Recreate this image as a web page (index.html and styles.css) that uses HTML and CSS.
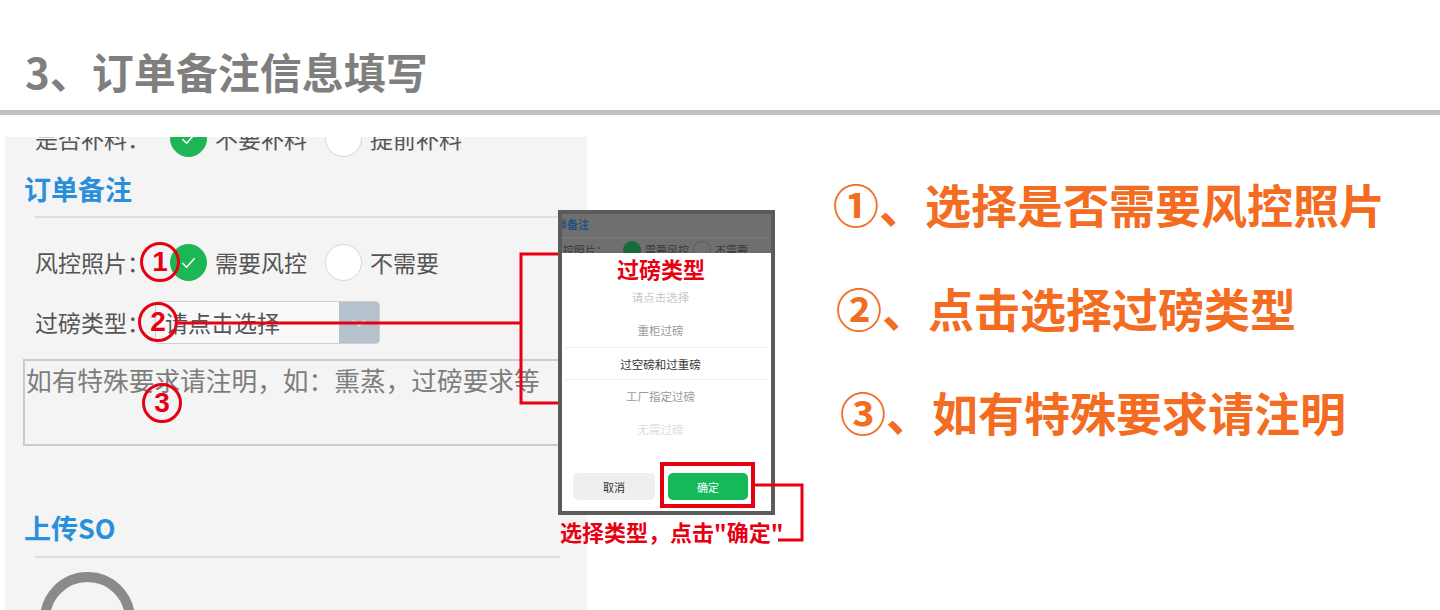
FILE: index.html
```html
<!DOCTYPE html>
<html>
<head>
	<meta charset="utf-8">
	<title>订单备注信息填写</title>
	<link rel="stylesheet" href="styles.css">
</head>
<body>
<div class="slide">
	<div class="slide_head">
		<h1 class="slide_title">3、订单备注信息填写</h1>
	</div>
	<div class="slide_rule"></div>
	<div class="slide_body">
		<div class="phone">
			<div class="row row_cut">
				<span class="label">是否补料：</span>
				<span class="radio checked"><svg viewBox="0 0 37 37"><polyline points="12,19 16.5,23.5 25,14"/></svg></span>
				<span class="opt">不要补料</span>
				<span class="radio"></span>
				<span class="opt">提前补料</span>
			</div>
			<h2 class="section">订单备注</h2>
			<div class="divider"></div>
			<div class="row row_risk">
				<span class="label">风控照片：</span>
				<span class="radio checked"><svg viewBox="0 0 37 37"><polyline points="12,19 16.5,23.5 25,14"/></svg></span>
				<span class="opt">需要风控</span>
				<span class="radio"></span>
				<span class="opt">不需要</span>
			</div>
			<div class="row row_weigh">
				<span class="label">过磅类型：</span>
				<div class="select">
					<span class="select_text">请点击选择</span>
					<span class="select_btn"><svg viewBox="0 0 40 41"><polyline points="14,18 20,24 26,18"/></svg></span>
				</div>
			</div>
			<div class="memo">如有特殊要求请注明，如：熏蒸，过磅要求等</div>
			<h2 class="section section_so">上传SO</h2>
			<div class="divider divider_so"></div>
			<div class="ring"></div>
		</div>

		<div class="notes">
			<p class="note">①、选择是否需要风控照片</p>
			<p class="note note_2">②、点击选择过磅类型</p>
			<p class="note note_3">③、如有特殊要求请注明</p>
		</div>

		<!-- screenshot of the picker, laid over the form -->
		<div class="dialog">
			<div class="dialog_dim">
				<div class="dim_title">单备注</div>
				<div class="dim_line"></div>
				<div class="dim_row">
					<span class="dim_label">风控照片：</span>
					<span class="dim_radio checked"></span>
					<span>需要风控</span>
					<span class="dim_radio"></span>
					<span>不需要</span>
				</div>
			</div>
			<div class="dialog_panel">
				<div class="dialog_title">过磅类型</div>
				<ul class="picker">
					<li class="pick pick_faint">请点击选择</li>
					<li class="pick pick_near">重柜过磅</li>
					<li class="pick pick_active">过空磅和过重磅</li>
					<li class="pick pick_near">工厂指定过磅</li>
					<li class="pick pick_far">无需过磅</li>
				</ul>
				<div class="dialog_actions">
					<button class="btn btn_cancel">取消</button>
					<button class="btn btn_ok">确定</button>
				</div>
			</div>
		</div>

		<div class="focus"></div>
		<p class="caption">选择类型，点击"确定"</p>

		<span class="mark mark_1">1</span>
		<span class="mark mark_2">2</span>
		<span class="mark mark_3">3</span>

		<svg class="links" viewBox="0 0 1440 495">
			<polyline points="178,208 521,208"/>
			<polyline points="558,139 521,139 521,288 558,288"/>
			<polyline points="755,370 802,370 802,425 778,425"/>
		</svg>
	</div>
</div>
</body>
</html>
```

FILE: styles.css
```css
* {
	box-sizing: border-box;
}
body {
	margin: 0;
	background: #fff;
	font-family: "Noto Sans CJK SC", "Noto Sans", sans-serif;
}
.slide {
	width: 1440px;
	height: 610px;
	overflow: hidden;
}
.slide_head {
	height: 110px;
	padding: 46px 0 0 25px;
}
.slide_title {
	margin: 0;
	font-size: 42px;
	line-height: 50px;
	font-weight: 700;
	color: #7f7f7f;
}
.slide_rule {
	height: 5px;
	background: #c0c0c0;
}
.slide_body {
	position: relative;
	display: flex;
	align-items: flex-start;
	height: 495px;
}

/* phone form */
.phone {
	display: flex;
	flex-direction: column;
	flex-shrink: 0;
	width: 582px;
	height: 473px;
	margin: 22px 0 0 5px;
	background: #f4f4f4;
	color: #555;
	overflow: hidden;
}
.row {
	display: flex;
	align-items: center;
	flex-shrink: 0;
	height: 44px;
	padding-left: 30px;
	font-size: 23px;
}
.row_cut {
	margin-top: -21px;
}
.row_risk {
	margin-top: 22px;
}
.row_weigh {
	margin-top: 16px;
}
.label {
	width: 115px;
	white-space: nowrap;
}
.radio {
	width: 37px;
	height: 37px;
	margin: 0 8px 0 20px;
	border: 1px solid #d6d6d6;
	border-radius: 50%;
	background: #fff;
}
.radio + .opt + .radio {
	margin-left: 18px;
}
.radio.checked {
	border-color: #1db657;
	background: #1db657;
}
.radio svg {
	display: block;
	width: 35px;
	height: 35px;
	fill: none;
	stroke: #fff;
	stroke-width: 1.6;
}
.opt {
	white-space: nowrap;
}
.section {
	flex-shrink: 0;
	margin: 12px 0 0;
	padding-left: 19px;
	font-size: 27px;
	line-height: 34px;
	font-weight: 700;
	color: #2a8fdb;
}
.divider {
	flex-shrink: 0;
	height: 2px;
	margin: 10px 27px 0 30px;
	background: #dedede;
}
.select {
	display: flex;
	width: 225px;
	height: 43px;
	margin-left: 5px;
	border: 1px solid #cfcfcf;
	border-radius: 4px;
	background: #f9f9f9;
	overflow: hidden;
}
.select_text {
	flex: 1;
	padding-left: 9px;
	line-height: 41px;
	white-space: nowrap;
}
.select_btn {
	width: 40px;
	background: #b5c2ce;
}
.select_btn svg {
	display: block;
	width: 40px;
	height: 41px;
	fill: none;
	stroke: #dde4ea;
	stroke-width: 1.5;
}
.memo {
	flex-shrink: 0;
	width: 565px;
	height: 87px;
	margin: 15px 0 0 18px;
	padding: 4px 0 0 1px;
	border: 2px solid #cbcbcb;
	font-size: 25.7px;
	line-height: 30px;
	color: #7d7d7d;
	white-space: nowrap;
}
.section_so {
	margin-top: 65px;
}
.divider_so {
	margin-top: 11px;
}
.ring {
	flex-shrink: 0;
	width: 95px;
	height: 95px;
	margin: 14px 0 0 35px;
	border: 10px solid #8a8a8a;
	border-radius: 50%;
}

/* orange steps */
.notes {
	margin-left: 246px;
	padding-top: 60px;
}
.note {
	margin: 0 0 48px;
	font-size: 46px;
	line-height: 56px;
	font-weight: 700;
	color: #f36c22;
	white-space: nowrap;
}
.note_2 {
	margin-left: 3px;
}
.note_3 {
	margin-left: 7px;
}

/* picker screenshot */
.dialog {
	position: absolute;
	left: 558px;
	top: 95px;
	display: flex;
	flex-direction: column;
	width: 217px;
	height: 305px;
	border: 4px solid #5b5b5b;
	background: #fff;
}
.dialog_dim {
	height: 39px;
	background: #6f6f6f;
	overflow: hidden;
	font-size: 11px;
	color: #3a3a3a;
}
.dim_title {
	margin: 2px 0 0 -6px;
	line-height: 16px;
	font-weight: 700;
	color: #1f4f7c;
}
.dim_line {
	height: 1px;
	margin-top: 5px;
	background: #7c7c7c;
}
.dim_row {
	display: flex;
	align-items: center;
	gap: 4px;
	height: 20px;
	margin: 2px 0 0 -10px;
	white-space: nowrap;
}
.dim_label {
	margin-right: 12px;
}
.dim_radio {
	width: 18px;
	height: 18px;
	border: 1px solid #5a5a5a;
	border-radius: 50%;
	background: #707070;
}
.dim_radio.checked {
	border-color: #156c36;
	background: #156c36;
}
.dialog_panel {
	flex: 1;
	padding: 0 23px 0 11px;
}
.dialog_title {
	padding: 2px 0 0 44px;
	font-size: 22px;
	line-height: 26px;
	font-weight: 700;
	color: #e60012;
}
.picker {
	margin: 0 -20px 0 -8px;
	padding: 0;
	list-style: none;
}
.pick {
	height: 33px;
	padding-right: 12px;
	font-size: 11.5px;
	line-height: 33px;
	text-align: center;
}
.pick_faint {
	color: #c8c8c8;
}
.pick_near {
	color: #9a9a9a;
}
.pick_active {
	border-top: 1px solid #eeeeee;
	border-bottom: 1px solid #eeeeee;
	color: #333;
}
.pick_far {
	color: #dcdcdc;
}
.dialog_actions {
	display: flex;
	gap: 13px;
	margin-top: 27px;
}
.btn {
	height: 27px;
	border: 0;
	border-radius: 5px;
	font-family: inherit;
	font-size: 11px;
}
.btn_cancel {
	width: 82px;
	background: #efefef;
	color: #333;
}
.btn_ok {
	width: 80px;
	background: #16b95a;
	color: #fff;
}

/* red annotations */
.focus {
	position: absolute;
	left: 660px;
	top: 347px;
	width: 95px;
	height: 46px;
	border: 4px solid #e60012;
}
.caption {
	position: absolute;
	left: 560px;
	top: 402px;
	margin: 0;
	font-size: 22px;
	line-height: 28px;
	font-weight: 700;
	color: #e60012;
	white-space: nowrap;
}
.mark {
	position: absolute;
	width: 40px;
	height: 40px;
	border: 3px solid #e60012;
	border-radius: 50%;
	font-family: "Liberation Sans", sans-serif;
	font-size: 28px;
	line-height: 34px;
	font-weight: 700;
	text-align: center;
	color: #e60012;
}
.mark_1 {
	left: 140px;
	top: 127px;
}
.mark_2 {
	left: 138px;
	top: 187px;
}
.mark_3 {
	left: 142px;
	top: 268px;
}
.links {
	position: absolute;
	left: 0;
	top: 0;
	width: 1440px;
	height: 495px;
	fill: none;
	stroke: #e60012;
	stroke-width: 3;
}
```
